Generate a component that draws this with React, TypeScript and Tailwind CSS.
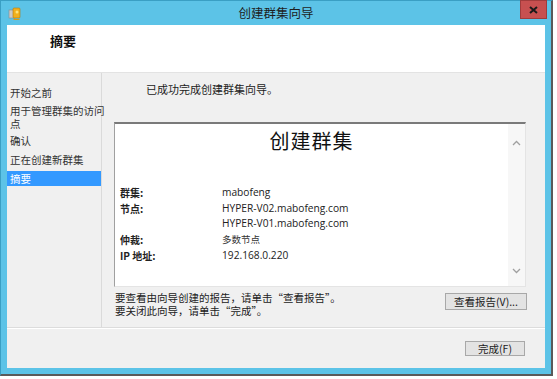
import React from "react";

const cjk = "font-['Noto_Sans_CJK_SC','Noto_Sans',sans-serif]";

function ScrollArrow({ up }: { up: boolean }) {
  return (
    <svg width="9" height="6" viewBox="0 0 9 6">
      <path
        d={up ? "M1 5 L4.5 1.5 L8 5" : "M1 1 L4.5 4.5 L8 1"}
        fill="none"
        stroke="#a0a0a0"
        strokeWidth="1.3"
      />
    </svg>
  );
}

function AppIcon() {
  return (
    <svg width="14" height="14" viewBox="0 0 14 14">
      <rect x="1" y="3" width="6" height="8" fill="#c9c9c9" stroke="#8a8a8a" strokeWidth="0.6" />
      <rect x="5" y="1" width="7" height="10" rx="1" fill="#f2b01e" stroke="#b07a10" strokeWidth="0.6" />
      <path d="M6 12 L11 12 L12 13 L5 13 Z" fill="#e09a10" />
      <circle cx="9" cy="5" r="1.5" fill="#fde27a" />
    </svg>
  );
}

export default function App() {
  const rows: { label: string; values: string[]; cjkVal?: boolean }[] = [
    { label: "群集:", values: ["mabofeng"] },
    { label: "节点:", values: ["HYPER-V02.mabofeng.com", "HYPER-V01.mabofeng.com"] },
    { label: "仲裁:", values: ["多数节点"], cjkVal: true },
    { label: "IP 地址:", values: ["192.168.0.220"] },
  ];
  return (
    <div className={`w-[557px] h-[379px] bg-white overflow-hidden ${cjk}`}>
      <div className="w-[553px] h-[376px] bg-[#5cc3e7] border-r-2 border-b-2 border-[#5a5a5a] flex flex-col border-l border-l-[#3a9fc4] border-t border-t-[#3a9fc4]">
        {/* title bar */}
        <div className="h-[24px] flex items-center relative shrink-0">
          <div className="pl-[7px] pt-[2px]">
            <AppIcon />
          </div>
          <div className="absolute left-0 right-0 top-[3px] text-center text-[12.5px] text-[#1e1e1e] leading-[18px]">
            创建群集向导
          </div>
          <div className="absolute right-[4px] top-[-1px] w-[27px] h-[19px] bg-[#c75050] border border-[#a03c3c] flex items-center justify-center">
            <svg width="9" height="8" viewBox="0 0 9 8">
              <path d="M1 1 L8 7 M8 1 L1 7" stroke="#1a1a1a" strokeWidth="2" />
            </svg>
          </div>
        </div>
        {/* body */}
        <div className="ml-[6px] mr-[6px] h-[343px] flex flex-col bg-[#f0f0f0] shrink-0">
          {/* header */}
          <div className="h-[48px] bg-white border-b border-[#e3e3e3] flex items-center pl-[43px] shrink-0">
            <span className="text-[13px] font-bold text-[#111] pb-[16px]">摘要</span>
          </div>
          {/* middle */}
          <div className="h-[255px] flex shrink-0 border-b border-[#dcdcdc]">
            {/* nav */}
            <div className="w-[95px] shrink-0 border-r border-[#dadada] pt-[13px] text-[10.5px] text-[#333] leading-[13px] whitespace-nowrap">
              <div className="pl-[3px] h-[18px]">开始之前</div>
              <div className="pl-[3px] leading-[13px] h-[30px]">用于管理群集的访问<br />点</div>
              <div className="pl-[3px] h-[19px]">确认</div>
              <div className="pl-[3px] h-[18px]">正在创建新群集</div>
              <div className="pl-[3px] w-[94px] h-[15px] bg-[#3399ff] text-white leading-[15px]">摘要</div>
            </div>
            {/* main */}
            <div className="flex-1 flex flex-col">
              <div className="pl-[44px] pt-[9px] text-[11px] text-[#222] leading-[14px]">已成功完成创建群集向导。</div>
              <div className="ml-[12px] mt-[26px] w-[412px] h-[165px] bg-white border-t-2 border-t-[#7a7a7a] border-l border-l-[#a0a0a0] border-r border-r-[#e4e4e4] border-b border-b-[#e4e4e4] flex">
                <div className="flex-1 flex flex-col">
                  <div className="text-center text-[20px] text-[#111] leading-[28px] pt-[3px] tracking-[1px]">创建群集</div>
                  <div className="mt-[30px] pl-[5px] text-[10px] leading-[15px] text-[#222]">
                    {rows.map((r) => (
                      <div key={r.label} className="flex mb-[1px]">
                        <div className="w-[102px] font-bold">{r.label}</div>
                        <div className="font-['Open_Sans','Noto_Sans_CJK_SC',sans-serif] text-[10.2px]">
                          {r.values.map((v) => (
                            <div key={v} className={r.cjkVal ? `${cjk} text-[9.5px] text-[#333]` : ""}>{v}</div>
                          ))}
                        </div>
                      </div>
                    ))}
                  </div>
                </div>
                <div className="w-[17px] bg-[#f7f7f7] flex flex-col items-center justify-between pt-[16px] pb-[12px]">
                  <ScrollArrow up />
                  <ScrollArrow up={false} />
                </div>
              </div>
              <div className="flex items-start justify-between pl-[13px] pr-[18px] mt-[4px]">
                <div className="text-[10.5px] leading-[13px] text-[#222]">
                  <div>要查看由向导创建的报告，请单击“查看报告”。</div>
                  <div>要关闭此向导，请单击“完成”。</div>
                </div>
                <div className="mt-[2px] w-[82px] h-[17px] bg-[#e3e3e3] border border-[#a8a8a8] text-[10.5px] text-[#222] flex items-center justify-center leading-[14px]">
                  查看报告(V)...
                </div>
              </div>
            </div>
          </div>
          {/* footer */}
          <div className="flex-1 flex justify-end items-start pr-[20px] pt-[12px] border-t border-white">
            <div className="w-[60px] h-[15px] bg-[#e3e3e3] border border-[#a8a8a8] text-[10.5px] text-[#222] flex items-center justify-center leading-[13px]">
              完成(F)
            </div>
          </div>
        </div>
      </div>
    </div>
  );
}
